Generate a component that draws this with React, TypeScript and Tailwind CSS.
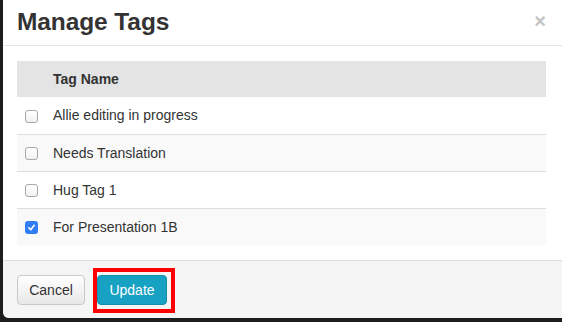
import React from "react";

const rows = [
  { name: "Allie editing in progress", checked: false },
  { name: "Needs Translation", checked: false },
  { name: "Hug Tag 1", checked: false },
  { name: "For Presentation 1B", checked: true },
];

function Box({ checked }: { checked: boolean }) {
  if (checked) {
    return (
      <span className="flex h-[13px] w-[13px] items-center justify-center rounded-[3px] bg-[#2f7ef6]">
        <svg width="9" height="9" viewBox="0 0 10 10">
          <path d="M2 5.3 L4.2 7.4 L8 2.6" fill="none" stroke="#fff" strokeWidth="1.8" strokeLinecap="round" strokeLinejoin="round" />
        </svg>
      </span>
    );
  }
  return <span className="block h-[13px] w-[13px] rounded-[3px] border border-[#a9a9a9] bg-gradient-to-b from-white to-[#f1f1f1]" />;
}

export default function App() {
  return (
    <div
      className="h-[322px] w-[562px] overflow-hidden bg-[#1d1d1d]"
      style={{ fontFamily: '"Liberation Sans", Arial, sans-serif' }}
    >
      <div className="ml-[3px] flex h-[318px] flex-col rounded-bl-[6px] bg-white text-[#333]">
        <div className="relative flex h-[46px] items-center border-b border-[#e5e5e5] pl-[14px]">
          <h1 className="text-[24.5px] font-bold leading-none tracking-[-0.1px]">Manage Tags</h1>
          <span className="absolute right-[16px] top-[11px] text-[20px] font-bold leading-none text-[#c4c4c4]">×</span>
        </div>
        <div className="flex h-[214px] flex-col pl-[14px] pr-[16px] pt-[15px]">
          <div className="flex h-[36px] items-center bg-[#e4e4e4] text-[14px] font-bold">
            <span className="pl-[36px]">Tag Name</span>
          </div>
          {rows.map((r, i) => (
            <div
              key={r.name}
              className={`flex h-[37px] items-center text-[14px] ${i > 0 ? "border-t border-[#dedede]" : ""} ${i % 2 === 1 ? "bg-[#f9f9f9]" : "bg-white"}`}
            >
              <span className="flex w-[36px] justify-start pl-[8px] pt-[1px]">
                <Box checked={r.checked} />
              </span>
              <span>{r.name}</span>
            </div>
          ))}
        </div>
        <div className="flex flex-1 items-start gap-[12px] rounded-bl-[6px] border-t border-[#dddddd] bg-[#f5f5f5] pl-[14px] pt-[14px]">
          <button className="h-[30px] w-[68px] rounded-[4px] border border-[#c8c8c8] bg-gradient-to-b from-white to-[#e8e8e8] text-[14px] text-[#333] shadow-[inset_0_1px_0_rgba(255,255,255,0.6)]">
            Cancel
          </button>
          <div className="relative">
            <button className="h-[30px] w-[70px] rounded-[4px] border border-[#1490ae] bg-[#17a1c3] text-[14px] text-white">
              Update
            </button>
            <span className="pointer-events-none absolute -bottom-[8px] -left-[4px] -right-[8px] -top-[7px] border-[4px] border-[#ff0000]" />
          </div>
        </div>
      </div>
    </div>
  );
}
